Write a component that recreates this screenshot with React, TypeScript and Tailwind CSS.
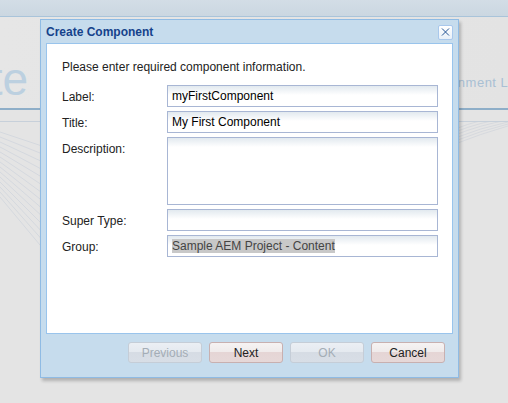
import { X } from "lucide-react";

const fields = [
  { label: "Label:", value: "myFirstComponent" },
  { label: "Title:", value: "My First Component" },
];

function Field({ value, tall, selected }: { value?: string; tall?: boolean; selected?: boolean }) {
  return (
    <div
      className={`w-[271px] ${tall ? "h-[68px]" : "h-[22px]"} border border-[#a8b6d4] bg-[linear-gradient(#e2e9ef,#ffffff_9px)] px-[4px] pt-[3px] text-[12px] leading-[14px] text-black`}
    >
      {value && (
        <span className={selected ? "bg-[#c8c8c8] text-[#444]" : ""}>{value}</span>
      )}
    </div>
  );
}

function Label({ children }: { children: string }) {
  return <div className="pt-[5px] text-[12px] leading-[14px] text-[#222]">{children}</div>;
}

function Button({ children, disabled }: { children: string; disabled?: boolean }) {
  return (
    <button
      className={`w-[74px] h-[21px] rounded-[3px] border text-[12px] leading-[14px] ${
        disabled
          ? "border-[#c5cdd7] text-[#a4adb6] bg-[linear-gradient(#ebeff4,#e4e9ef_50%,#d6dce4_50%,#d8dee6)]"
          : "border-[#c8b0b0] text-[#222] bg-[linear-gradient(#f6f3f3,#efeaea_50%,#e5d5d5_50%,#e6d8d8)]"
      }`}
    >
      {children}
    </button>
  );
}

export default function App() {
  return (
    <div className="relative w-[508px] h-[403px] overflow-hidden bg-[#e4e4e4] font-['Liberation_Sans',Arial,sans-serif]">
      {/* page behind the dialog */}
      <div className="h-[17px] bg-[linear-gradient(#d3dde6,#cbd7e1)] border-b border-[#a9c4da]" />
      <div className="h-[91px] grid grid-cols-[418px_90px] items-end bg-[linear-gradient(90deg,#e6e6e6,#e3e3e3)]">
        <div className="flex">
          <span className="-ml-[110px] mb-[6px] text-[46px] leading-[46px] text-[#bcd0e0] whitespace-nowrap">
            Create
          </span>
        </div>
        <span className="mb-[18px] text-[13px] leading-[15px] tracking-[0.5px] text-[#a9c0d4] whitespace-nowrap">
          Environment List
        </span>
      </div>
      <div className="h-[2px] bg-[#8eaec8]" />
      <div className="h-[11px]" />
      <div className="h-px bg-[#c7d0da]" />
      <svg width="508" height="140" className="block" viewBox="0 0 508 140">
        {Array.from({ length: 14 }).map((_, i) => (
          <line
            key={i}
            x1="0"
            y1={10 + i * 5}
            x2="60"
            y2={30 + i * 9}
            stroke="#d4d8de"
            strokeWidth="1"
          />
        ))}
        {Array.from({ length: 6 }).map((_, i) => (
          <path
            key={`r${i}`}
            d={`M455 ${22 - i * 3} Q480 ${12 - i * 3} 508 ${4 - i * 2}`}
            stroke="#d6d9de"
            fill="none"
          />
        ))}
      </svg>

      {/* dialog */}
      <div className="absolute left-[40px] top-[19px] w-[419px] h-[359px] flex flex-col border border-[#8fbbe4] bg-[#c6dced] shadow-[2px_3px_3px_rgba(0,0,0,0.22)]">
        <div className="h-[23px] flex items-center justify-between pl-[5px] pr-[5px]">
          <span className="text-[12px] font-bold leading-[14px] text-[#15428b]">Create Component</span>
          <span className="w-[15px] h-[15px] mt-[1px] flex items-center justify-center rounded-[2px] border border-[#a9c8ec] bg-[linear-gradient(#ffffff,#e8f0f8)]">
            <X size={14} strokeWidth={1.8} className="text-[#1e4f91]" />
          </span>
        </div>
        <div className="mx-[5px] h-[291px] border border-[#99c4ec] bg-white pl-[15px] pt-[16px]">
          <p className="text-[12px] leading-[14px] text-[#222]">
            Please enter required component information.
          </p>
          <div className="mt-[11px] grid grid-cols-[105px_271px] gap-y-[4px]">
            {fields.map((f) => (
              <div key={f.label} className="contents">
                <Label>{f.label}</Label>
                <Field value={f.value} />
              </div>
            ))}
            <Label>Description:</Label>
            <Field tall />
            <Label>Super Type:</Label>
            <Field />
            <Label>Group:</Label>
            <Field value="Sample AEM Project - Content" selected />
          </div>
        </div>
        <div className="flex justify-end gap-[7px] pr-[13px] pt-[8px]">
          <Button disabled>Previous</Button>
          <Button>Next</Button>
          <Button disabled>OK</Button>
          <Button>Cancel</Button>
        </div>
      </div>
    </div>
  );
}
